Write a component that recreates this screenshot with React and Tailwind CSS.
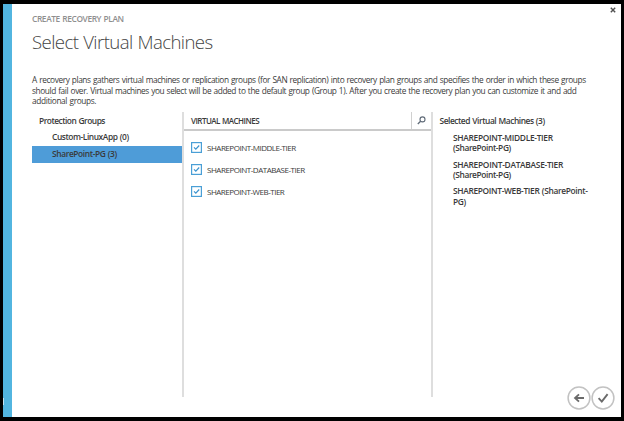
const GROUPS = [
  { name: "Custom-LinuxApp (0)", className: "leading-[16.5px] tracking-[-0.43px]" },
  { name: "SharePoint-PG (3)", className: "bg-[#4e9cd8] leading-[16px] tracking-[-0.38px]" },
];

const MACHINES = [
  { name: "SHAREPOINT-MIDDLE-TIER", className: "tracking-[-0.48px]" },
  { name: "SHAREPOINT-DATABASE-TIER", className: "tracking-[-0.47px]" },
  { name: "SHAREPOINT-WEB-TIER", className: "tracking-[-0.49px]" },
];

function Checkbox() {
  return (
    <svg viewBox="0 0 11 11" className="h-[11px] w-[11px] shrink-0" fill="none">
      <rect x="0.6" y="0.6" width="9.8" height="9.8" stroke="#4a9fd6" strokeWidth="1.2" />
      <path d="M3 5.4 4.8 7.2 8.2 3.5" stroke="#3b93cf" strokeWidth="1.2" />
    </svg>
  );
}

function RoundButton({ label, children }) {
  return (
    <button aria-label={label} className="h-6 w-6">
      <svg viewBox="0 0 24 24" className="block h-6 w-6" fill="none">
        <circle cx="12" cy="12" r="10.9" stroke="#c2c2c2" strokeWidth="1.5" />
        {children}
      </svg>
    </button>
  );
}

function Selected({ first, second, className }) {
  return (
    <li className="mb-[5.9px] h-[20.8px] leading-[10.4px] whitespace-nowrap">
      <div className={className}>{first}</div>
      <div className="tracking-[-0.39px]">{second}</div>
    </li>
  );
}

export default function App() {
  return (
    <div className="h-[421px] w-[624px] overflow-hidden bg-black pt-1 pr-[3px] pb-1 pl-[3px] font-['Open_Sans','Noto_Sans',sans-serif] text-[8.4px] text-[#3a3a3a] [word-spacing:0.6px]">
      <div className="flex h-[413px] w-[618px] bg-white">
        <div className="flex w-[9px] shrink-0 items-end bg-[#52b5e0] pb-[12px]">
          <div className="h-[7px] w-px bg-[#c4e4f3]" />
        </div>
        <div className="flex min-w-0 flex-1 flex-col pl-5">
          <header className="flex h-[71px] justify-between">
            <div>
              <div className="mt-[8px] h-3 text-[8.4px] leading-[13px] font-semibold tracking-[-0.4px] whitespace-nowrap text-[#8f8f8f]">
                CREATE RECOVERY PLAN
              </div>
              <h1 className="mt-[6px] h-6 text-[18.6px] leading-[23px] font-light tracking-[-0.58px] whitespace-nowrap text-[#444]">
                Select Virtual Machines
              </h1>
            </div>
            <button aria-label="Close" className="mt-[3px] mr-[5px] h-[6px] w-[6px]">
              <svg viewBox="0 0 6 6" className="block h-[6px] w-[6px]">
                <path d="M.8.8 5.2 5.2M5.2.8.8 5.2" stroke="#505050" strokeWidth="1.4" />
              </svg>
            </button>
          </header>

          <div className="h-[37px] text-[8.3px] leading-[10.7px] whitespace-nowrap">
            <div className="tracking-[-0.396px]">
              A recovery plans gathers virtual machines or replication groups (for SAN replication) into recovery plan groups and specifies the order in which these groups
            </div>
            <div className="tracking-[-0.404px]">
              should fail over. Virtual machines you select will be added to the default group (Group 1). After you create the recovery plan you can customize it and add
            </div>
            <div className="tracking-[-0.36px]">additional groups.</div>
          </div>

          <div className="flex h-[285px] font-semibold">
            <nav className="w-[150px] shrink-0 pt-[3px]">
              <h2 className="h-[14px] pl-[7px] leading-[12px] tracking-[-0.5px]">Protection Groups</h2>
              <ul>
                {GROUPS.map((g) => (
                  <li key={g.name} className={`h-[17px] pl-5 ${g.className}`}>
                    {g.name}
                  </li>
                ))}
              </ul>
            </nav>

            <section className="w-[251px] shrink-0 border-x-2 border-[#dedede]">
              <div className="flex h-[19px] border-b-2 border-[#cacaca]">
                <h2 className="flex-1 pl-[7px] text-[8px] leading-[17px] tracking-[-0.54px]">VIRTUAL MACHINES</h2>
                <div className="flex w-5 items-center justify-center border-l border-[#d0d0d0]">
                  <svg viewBox="0 0 9 9" className="h-[9px] w-[9px]" fill="none" stroke="#5f6a77">
                    <circle cx="5.5" cy="3.4" r="2.5" strokeWidth="1.1" />
                    <path d="M3.6 5.2.8 8" strokeWidth="1.3" />
                  </svg>
                </div>
              </div>
              <ul className="pt-[11px] pl-[6.5px] text-[8px] font-normal">
                {MACHINES.map((m) => (
                  <li key={m.name} className="mb-[11px] flex h-[11px] items-center gap-[5.5px]">
                    <Checkbox />
                    <span className={`leading-[11px] whitespace-nowrap ${m.className}`}>{m.name}</span>
                  </li>
                ))}
              </ul>
            </section>

            <section className="min-w-0 flex-1 pt-[3px] pl-[6.5px]">
              <h2 className="h-[18px] leading-[12px] tracking-[-0.45px]">Selected Virtual Machines (3)</h2>
              <ul className="pl-[13.5px]">
                <Selected first="SHAREPOINT-MIDDLE-TIER" second="(SharePoint-PG)" className="tracking-[-0.31px]" />
                <Selected first="SHAREPOINT-DATABASE-TIER" second="(SharePoint-PG)" className="tracking-[-0.29px]" />
                <Selected first="SHAREPOINT-WEB-TIER (SharePoint-" second="PG)" className="tracking-[-0.34px]" />
              </ul>
            </section>
          </div>

          <footer className="flex h-5 -translate-y-[11px] justify-end pr-[6px]">
            <RoundButton label="Back">
              <path d="M17 12H8.2M12 8.3 8 12l4 3.7" stroke="#6a6a6a" strokeWidth="1.8" />
            </RoundButton>
            <RoundButton label="Finish">
              <path d="m7.6 12.2 3.2 3.4 5.8-7.4" stroke="#6a6a6a" strokeWidth="1.9" />
            </RoundButton>
          </footer>
        </div>
      </div>
    </div>
  );
}
